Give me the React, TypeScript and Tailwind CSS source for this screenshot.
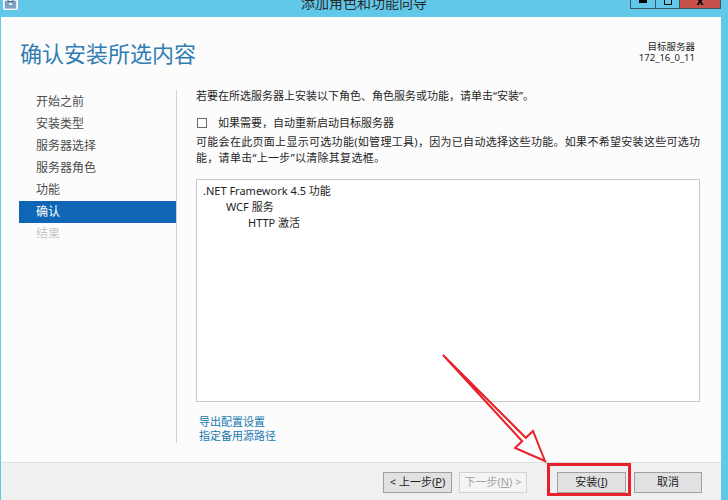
import React from "react";

const FONT = { fontFamily: '"Noto Sans", "Noto Sans CJK SC", sans-serif' };

function TitleIcon() {
  return (
    <svg width="15" height="10" viewBox="0 0 15 10" className="block">
      <rect x="0.5" y="-3" width="14" height="12.5" rx="1" fill="#dfe9f2" stroke="#ffffff" />
      <rect x="2" y="1" width="11" height="7.5" fill="#7da2c4" />
      <rect x="5" y="-1" width="5" height="2.5" fill="none" stroke="#4c6f91" strokeWidth="1" />
      <rect x="6" y="3" width="3" height="2" fill="#e8eef5" />
    </svg>
  );
}

function WinControls() {
  return (
    <div className="flex h-[9px] items-stretch">
      <div className="w-[26px] border border-t-0 border-[#3a5866] bg-[#62c8ea] flex justify-center">
        <div className="w-[8px] h-[3px] bg-black" />
      </div>
      <div className="w-[24px] border border-t-0 border-l-0 border-[#3a5866] bg-[#62c8ea] flex justify-center">
        <div className="w-[8px] h-[5px] border-[1.5px] border-t-0 border-black" />
      </div>
      <div className="w-[41px] border border-t-0 border-l-0 border-[#3a5866] bg-[#c7514b] flex justify-center">
        <span className="text-[12px] leading-[6px] text-black font-bold -mt-[2px]">x</span>
      </div>
    </div>
  );
}

function NavItem({ label, active, disabled }: { label: string; active?: boolean; disabled?: boolean }) {
  return (
    <div
      className={
        "h-[22px] pl-[17px] flex items-center text-[12px] " +
        (active ? "bg-[#0f66b6] text-white" : disabled ? "text-[#c8c8c8]" : "text-[#4d4d4d]")
      }
    >
      {label}
    </div>
  );
}

function Btn({ children, w, disabled }: { children: React.ReactNode; w: string; disabled?: boolean }) {
  return (
    <div
      className={
        "h-[21px] flex items-center justify-center text-[11px] border " +
        w +
        (disabled
          ? " border-[#d2d2d2] bg-[#f4f4f4] text-[#a3a3a3]"
          : " border-[#a0a0a0] bg-[#e1e1e1] text-[#1e1e1e]")
      }
    >
      {children}
    </div>
  );
}

export default function App() {
  return (
    <div className="w-[728px] h-[500px] bg-[#62c8ea] relative overflow-hidden flex flex-col" style={FONT}>
      {/* title bar */}
      <div className="h-[17px] grid grid-cols-[1fr_auto_1fr] items-start">
        <div className="pl-[3px]">
          <TitleIcon />
        </div>
        <div className="text-[14px] leading-[14px] -mt-[4px] text-[#2a2a2a]">添加角色和功能向导</div>
        <div className="flex justify-end pr-[7px]">
          <WinControls />
        </div>
      </div>

      {/* body */}
      <div className="flex-1 flex flex-col ml-[1px] mr-[7px]">
        <div className="h-[445px] bg-[#fcfcfc] flex flex-col">
          {/* header */}
          <div className="flex justify-between items-start pl-[19px] pr-[26px] mt-[23px]">
            <div className="text-[22px] leading-[26px] text-[#2f7db3]">确认安装所选内容</div>
            <div className="mt-[1px] text-right text-[9.5px] leading-[11px] text-[#1e1e1e]">
              <div>目标服务器</div>
              <div>172_16_0_11</div>
            </div>
          </div>

          {/* main row */}
          <div className="flex mt-[24px] h-[353px]">
            <div className="ml-[18px] w-[158px] border-r border-[#d4d4d4] pt-[1px]">
              <NavItem label="开始之前" />
              <NavItem label="安装类型" />
              <NavItem label="服务器选择" />
              <NavItem label="服务器角色" />
              <NavItem label="功能" />
              <NavItem label="确认" active />
              <NavItem label="结果" disabled />
            </div>
            <div className="ml-[19px] w-[504px] flex flex-col text-[11px] text-[#262626]">
              <div className="leading-[12px] h-[12px]">若要在所选服务器上安装以下角色、角色服务或功能，请单击“安装”。</div>
              <div className="mt-[15px] h-[12px] flex items-center">
                <div className="ml-[1px] w-[10px] h-[10px] border border-[#6a6a6a] bg-white" />
                <div className="ml-[11px] leading-[12px]">如果需要，自动重新启动目标服务器</div>
              </div>
              <div className="mt-[5px] leading-[16px] tracking-[0.3px] whitespace-nowrap">
                <div>可能会在此页面上显示可选功能(如管理工具)，因为已自动选择这些功能。如果不希望安装这些可选功</div>
                <div>能，请单击“上一步”以清除其复选框。</div>
              </div>
              <div className="mt-[13px] h-[224px] border border-[#c8c8c8] bg-white pt-[3px] pl-[6px] leading-[16px] text-[#1e1e1e]">
                <div>.NET Framework 4.5 功能</div>
                <div className="pl-[23px]">WCF 服务</div>
                <div className="pl-[45px]">HTTP 激活</div>
              </div>
              <div className="mt-[13px] ml-[3px] leading-[14px] text-[#1979b1]">
                <div>导出配置设置</div>
                <div>指定备用源路径</div>
              </div>
            </div>
          </div>
        </div>

        {/* footer */}
        <div className="flex-1 bg-[#f0f0f0] border-t border-[#e0e0e0] flex justify-end items-start pt-[9px] pr-[19px]">
          <Btn w="w-[69px]">
            &lt; 上一步(<span className="underline">P</span>)
          </Btn>
          <div className="w-[7px]" />
          <Btn w="w-[68px]" disabled>
            下一步(<span className="underline">N</span>) &gt;
          </Btn>
          <div className="w-[30px]" />
          <Btn w="w-[69px]">
            安装(<span className="underline">I</span>)
          </Btn>
          <div className="w-[8px]" />
          <Btn w="w-[68px]">取消</Btn>
        </div>
      </div>

      {/* annotation: red highlight box */}
      <div className="absolute left-[547px] top-[463px] w-[84px] h-[33px] border-[3px] border-[#e8202a]" />
      {/* annotation: red arrow */}
      <svg className="absolute left-0 top-0 pointer-events-none" width="728" height="500" viewBox="0 0 728 500">
        <polygon
          points="443,355 525.8,437.8 533,431 545,461 515,448 522.2,441.2"
          fill="none"
          stroke="#e8202a"
          strokeWidth="2"
          strokeLinejoin="miter"
        />
      </svg>
    </div>
  );
}
